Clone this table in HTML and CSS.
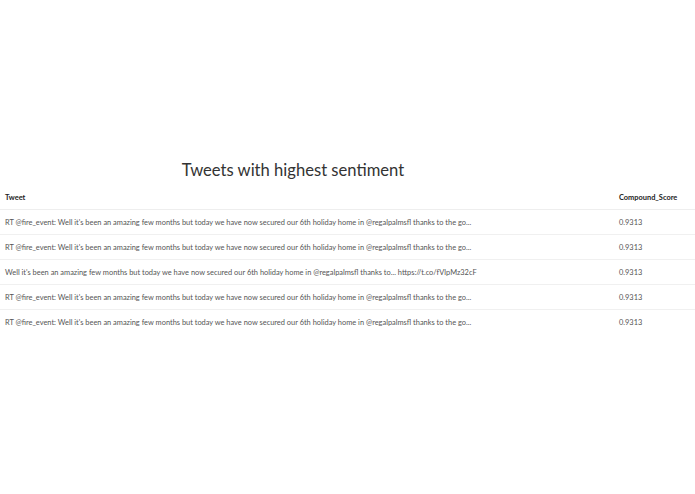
FILE: index.html
```html
<!DOCTYPE html>
<html>
<head>
<meta charset="utf-8">
<link rel="stylesheet" href="styles.css">
</head>
<body>
<div class="page">
  <h2 class="title">Tweets with highest sentiment</h2>
  <table class="tweets">
    <thead>
      <tr><th class="col-tweet">Tweet</th><th class="col-score">Compound_Score</th></tr>
    </thead>
    <tbody>
      <tr><td>RT @fire_event: Well it's been an amazing few months but today we have now secured our 6th holiday home in @regalpalmsfl thanks to the go...</td><td>0.9313</td></tr>
      <tr><td>RT @fire_event: Well it's been an amazing few months but today we have now secured our 6th holiday home in @regalpalmsfl thanks to the go...</td><td>0.9313</td></tr>
      <tr><td>Well it's been an amazing few months but today we have now secured our 6th holiday home in @regalpalmsfl thanks to... https://t.co/fVlpMz32cF</td><td>0.9313</td></tr>
      <tr><td>RT @fire_event: Well it's been an amazing few months but today we have now secured our 6th holiday home in @regalpalmsfl thanks to the go...</td><td>0.9313</td></tr>
      <tr><td>RT @fire_event: Well it's been an amazing few months but today we have now secured our 6th holiday home in @regalpalmsfl thanks to the go...</td><td>0.9313</td></tr>
    </tbody>
  </table>
</div>
</body>
</html>
```
FILE: styles.css
```css
html, body {
  margin: 0;
  padding: 0;
  background: #ffffff;
}
.page {
  padding-top: 157px;
  font-family: "Lato", "Open Sans", sans-serif;
}
.title {
  width: 586px;
  margin: 0 0 3px 0;
  text-align: center;
  font-weight: 400;
  font-size: 16.6px;
  line-height: 26px;
  color: #333333;
}
.tweets {
  width: 100%;
  border-collapse: collapse;
  font-size: 7.43px;
}
.tweets th {
  text-align: left;
  font-weight: 700;
  color: #222222;
  height: 23px;
  padding: 0 0 0 5px;
  border-bottom: 1px solid #eeeeee;
}
.tweets td {
  color: #555555;
  height: 24px;
  padding: 0 0 0 5px;
  border-bottom: 1px solid #f0f0f0;
}
.tweets tbody tr:last-child td {
  border-bottom: none;
}
.col-tweet { width: 609px; }
```
